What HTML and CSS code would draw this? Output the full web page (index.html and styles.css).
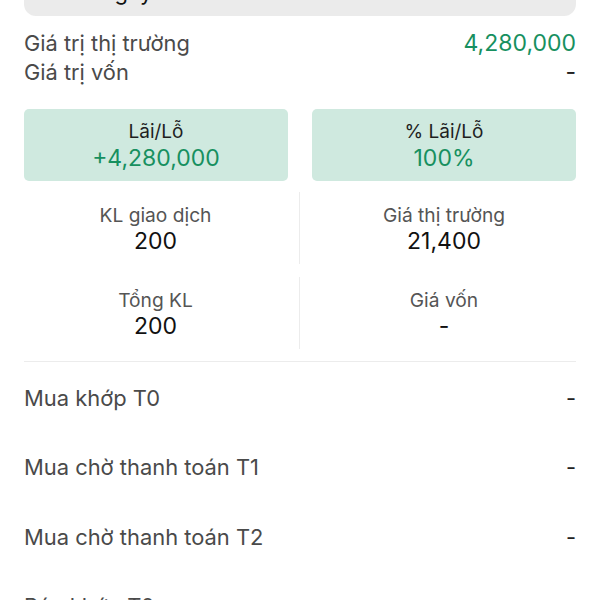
FILE: index.html
```html
<!DOCTYPE html>
<html lang="vi">
<head>
    <meta charset="UTF-8">
    <meta name="viewport" content="width=device-width, initial-scale=1.0">
    <title>Chi tiết</title>
    <link rel="stylesheet" href="styles.css">
</head>
<body>
    <div class="page">
        <div class="top-card">
            <span class="top-text">Ngày</span>
        </div>

        <div class="summary">
            <div class="summary-row">
                <span class="summary-label">Giá trị thị trường</span>
                <span class="summary-value green">4,280,000</span>
            </div>
            <div class="summary-row">
                <span class="summary-label">Giá trị vốn</span>
                <span class="summary-value">-</span>
            </div>
        </div>

        <div class="pl-boxes">
            <div class="pl-box">
                <span class="pl-label">Lãi/Lỗ</span>
                <span class="pl-value">+4,280,000</span>
            </div>
            <div class="pl-box">
                <span class="pl-label">% Lãi/Lỗ</span>
                <span class="pl-value">100%</span>
            </div>
        </div>

        <div class="stats-wrap">
            <div class="stats">
                <div class="stat">
                    <span class="stat-label">KL giao dịch</span>
                    <span class="stat-value">200</span>
                </div>
                <div class="stat">
                    <span class="stat-label">Giá thị trường</span>
                    <span class="stat-value">21,400</span>
                </div>
                <div class="stat">
                    <span class="stat-label">Tổng KL</span>
                    <span class="stat-value">200</span>
                </div>
                <div class="stat">
                    <span class="stat-label">Giá vốn</span>
                    <span class="stat-value">-</span>
                </div>
            </div>
        </div>

        <div class="list">
            <div class="list-row"><span>Mua khớp T0</span><span class="dash">-</span></div>
            <div class="list-row"><span>Mua chờ thanh toán T1</span><span class="dash">-</span></div>
            <div class="list-row"><span>Mua chờ thanh toán T2</span><span class="dash">-</span></div>
            <div class="list-row"><span>Bán khớp T0</span><span class="dash">-</span></div>
        </div>
    </div>
</body>
</html>
```

FILE: styles.css
```css
body {
    margin: 0;
    background-color: #fff;
    font-family: Inter, "Noto Sans", sans-serif;
    color: #111;
    overflow: hidden;
}
.page {
    padding: 0 24px;
}
.top-card {
    height: 16px;
    background-color: #ebebeb;
    border-radius: 0 0 12px 12px;
    position: relative;
    overflow: hidden;
}
.top-text {
    position: absolute;
    left: 74px;
    bottom: 11px;
    font-size: 22px;
    line-height: 26px;
    color: #111;
}
.summary {
    margin-top: 13px;
}
.summary-row {
    display: flex;
    justify-content: space-between;
    align-items: baseline;
    line-height: 29px;
}
.summary-label {
    font-size: 21.8px;
    color: #4a4a4a;
}
.summary-value {
    font-size: 23px;
    color: #222;
}
.green {
    color: #17905f;
}
.pl-boxes {
    display: grid;
    grid-template-columns: 1fr 1fr;
    gap: 24px;
    margin-top: 22px;
}
.pl-box {
    background-color: #cfe9df;
    border-radius: 5px;
    height: 72px;
    display: flex;
    flex-direction: column;
    align-items: center;
    justify-content: center;
}
.pl-label {
    font-size: 19px;
    line-height: 26px;
    color: #1e1e1e;
}
.pl-value {
    font-size: 23px;
    line-height: 27px;
    color: #17905f;
}
.stats-wrap {
    border-bottom: 1px solid #ececec;
    padding-bottom: 12px;
    margin-top: 11px;
}
.stats {
    display: grid;
    grid-template-columns: 1fr 1fr;
    row-gap: 13px;
    margin: 0 -12px;
}
.stat {
    display: flex;
    flex-direction: column;
    align-items: center;
    justify-content: center;
    height: 72px;
}
.stat:nth-child(odd) {
    border-right: 1px solid #ececec;
}
.stat-label {
    font-size: 19.2px;
    line-height: 26px;
    color: #555;
}
.stat-value {
    font-size: 23px;
    line-height: 26px;
    color: #111;
}
.list {
    margin-top: 1px;
}
.list-row {
    display: flex;
    justify-content: space-between;
    align-items: center;
    height: 69.5px;
    font-size: 21.9px;
    color: #4a4a4a;
}
.dash {
    color: #222;
}
```
